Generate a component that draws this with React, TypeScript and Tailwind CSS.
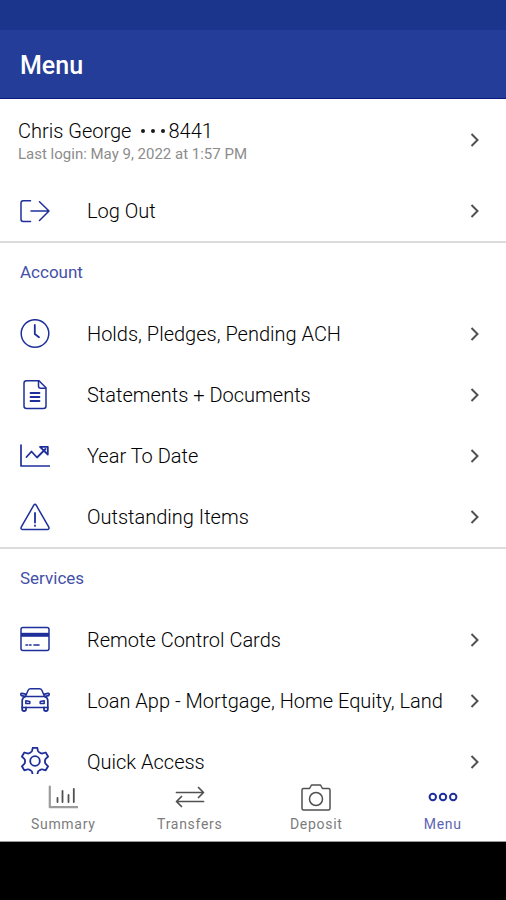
import type { ReactNode } from "react";

function Svg({ children }: { children: ReactNode }) {
  return (
    <svg
      width={30}
      height={30}
      viewBox="0 0 30 30"
      fill="none"
      stroke="currentColor"
      strokeWidth={1.5}
      strokeLinecap="round"
      strokeLinejoin="round"
      aria-hidden="true"
      className="shrink-0"
    >
      {children}
    </svg>
  );
}

const LogOutIcon = () => (
  <Svg>
    <path d="M10.500 4.800H3.200Q1 4.800 1 7v16.200q0 2.200 2.200 2.200h7.300" />
    <path d="M11 15h18M19.500 5.800 29 15l-9.500 9.500" />
  </Svg>
);

const ClockIcon = () => (
  <Svg>
    <circle cx="15" cy="14.500" r="13.800" />
    <path d="M14.800 6v9l4.200 3.300" strokeWidth={1.8} />
  </Svg>
);

const DocumentIcon = () => (
  <Svg>
    <path d="M19 .8H6.500Q4 .8 4 3.300V26q0 2.500 2.500 2.500h17q2.500 0 2.500-2.500V7.800z" />
    <path d="M18.500 1.300V6q0 2.300 2.300 2.300h4.700" />
    <path d="M10.500 13h9M10.500 17h9M10.500 21h9" strokeWidth={1.8} />
  </Svg>
);

const TrendIcon = () => (
  <Svg>
    <path d="M1 4v21h28.500" strokeWidth={1.7} />
    <path d="m6.500 16 5-5.500 5.500 6 8.500-8.500M20 5.800h7.800v7.700z" strokeWidth={1.8} />
  </Svg>
);

const WarningIcon = () => (
  <Svg>
    <path d="M13.800 3.200q1.200-1.700 2.400 0l12.600 22q.8 2.300-1.600 2.300H2.800q-2.400 0-1.600-2.300z" />
    <path d="M15 11v9.500M15 23.500v.4" strokeWidth={1.8} />
  </Svg>
);

const CardIcon = () => (
  <Svg>
    <rect x="1" y="2.500" width="28" height="23" rx="2" />
    <path d="M1 9.800h28" strokeWidth={4} strokeLinecap="butt" />
    <path d="M6 20h1.500m2 0h1.500m3 0h5" strokeWidth={1.6} />
  </Svg>
);

const CarIcon = () => (
  <Svg>
    <path d="M5.500 10.500 8 4.500q.8-1.700 2.600-1.700h8.800q1.800 0 2.600 1.700l2.500 6" />
    <path d="M5.500 10.500h19q3.300 1 3.300 4v7H2.200v-7q0-3 3.300-4z" strokeWidth={1.7} />
    <path d="M5 10.300l-3.500-.6Q-.2 7.600 2 7.400l3.500.8M25 10.300l3.500-.6q1.700-2.100-.5-2.300l-3.500.8" strokeWidth={1.7} />
    <path d="M2.200 21.500v1.700q0 1.800 1.900 1.800T6 23.200v-1.700M24 21.500v1.700q0 1.800 1.900 1.800t1.900-1.800v-1.700" strokeWidth={1.8} />
    <path d="m5.800 14.800 4 .6v2h-4zM24.200 14.800l-4 .6v2h4z" strokeWidth={1.5} />
  </Svg>
);

const GearIcon = () => (
  <Svg>
    <g strokeWidth={1.8}>
      <path d="M12.800.800h4.400l.8 3.200q.3.900 1.200 1.300l1.600.9q.8.500 1.700.2l3.200-.9 2.400 4-2.400 2.400q-.7.700-.7 1.700v1.600q0 1 .7 1.700l2.400 2.400-2.400 4-3.200-.9q-.9-.3-1.700.2l-1.600.9q-.9.400-1.200 1.300l-.8 3.200h-4.400l-.8-3.200q-.3-.9-1.200-1.300l-1.600-.9q-.8-.5-1.700-.2l-3.200.9-2.400-4 2.400-2.400q.7-.7.700-1.700v-1.600q0-1-.7-1.700L1.900 9.500l2.400-4 3.200.9q.9.300 1.700-.2l1.600-.9q.9-.4 1.200-1.300z" />
      <circle cx="15" cy="14" r="4.800" />
    </g>
  </Svg>
);

const SummaryIcon = () => (
  <Svg>
    <path d="M1.800 3.500v20.700h27.700" stroke="#9c9c9c" strokeWidth={2.2} />
    <path d="M9.500 15v4M14.500 8v11M20.500 12v7M25.800 6v13" strokeWidth={1.8} />
  </Svg>
);

const TransfersIcon = () => (
  <Svg>
    <path d="M1.500 9.500h27M23.500 4.500l5 5-5 5" strokeWidth={1.7} />
    <path d="M28.500 18.500h-27M6.500 13.500l-5 5 5 5" strokeWidth={1.7} />
  </Svg>
);

const CameraIcon = () => (
  <Svg>
    <path d="M10.500 2h9l2 3.500h6q1.500 0 1.500 1.500v18.500q0 1.500-1.500 1.500h-25Q1 27 1 25.500V7q0-1.500 1.500-1.500h6z" />
    <circle cx="15" cy="16" r="6.500" />
  </Svg>
);

const DotsIcon = () => (
  <Svg>
    <g strokeWidth={2}>
      <circle cx="4.800" cy="14" r="3.200" />
      <circle cx="15" cy="14" r="3.200" />
      <circle cx="25.200" cy="14" r="3.200" />
    </g>
  </Svg>
);

const Chevron = () => (
  <svg
    width={10}
    height={16}
    viewBox="0 0 10 16"
    fill="none"
    stroke="#505050"
    strokeWidth={2}
    aria-hidden="true"
    className="shrink-0"
  >
    <path d="m1.500 2 6 6-6 6" />
  </svg>
);

type Item = { label: string; icon: ReactNode };

const account: Item[] = [
  { label: "Holds, Pledges, Pending ACH", icon: <ClockIcon /> },
  { label: "Statements + Documents", icon: <DocumentIcon /> },
  { label: "Year To Date", icon: <TrendIcon /> },
  { label: "Outstanding Items", icon: <WarningIcon /> },
];

const services: Item[] = [
  { label: "Remote Control Cards", icon: <CardIcon /> },
  { label: "Loan App - Mortgage, Home Equity, Land", icon: <CarIcon /> },
  { label: "Quick Access", icon: <GearIcon /> },
];

const tabs: Item[] = [
  { label: "Summary", icon: <SummaryIcon /> },
  { label: "Transfers", icon: <TransfersIcon /> },
  { label: "Deposit", icon: <CameraIcon /> },
  { label: "Menu", icon: <DotsIcon /> },
];

function Row({ label, icon }: Item) {
  return (
    <button type="button" className="flex h-[61px] w-full items-center pr-[26px] pl-5 text-left">
      <span className="text-[#1f2f9a]">{icon}</span>
      <span className="ml-[37px] flex-1 text-xl whitespace-nowrap">{label}</span>
      <Chevron />
    </button>
  );
}

function Section({ title, items }: { title: string; items: Item[] }) {
  return (
    <section className="border-t-2 border-[#dcdcdc]">
      <h2 className="flex h-[60px] items-center px-5 text-[17px] font-normal text-[#4450a8]">{title}</h2>
      {items.map((item) => (
        <Row key={item.label} {...item} />
      ))}
    </section>
  );
}

export default function App() {
  return (
    <div className="flex h-screen flex-col bg-white font-[Roboto,sans-serif] font-light text-black">
      <div className="h-[30px] shrink-0 bg-[#1b358d]" />
      <header className="flex h-[69px] shrink-0 items-center border-b border-[#0a1a80] bg-[#233d98] px-5 pt-1">
        <h1 className="text-[25px] font-medium text-white">Menu</h1>
      </header>

      <main className="min-h-0 flex-1 overflow-y-auto [scrollbar-width:none]">
        <button type="button" className="flex h-[81px] w-full items-center pr-[26px] pl-[18px] text-left">
          <span className="flex-1 pt-1">
            <span className="flex items-center text-xl leading-6">
              Chris George
              <span className="mr-[3px] ml-[10px] flex gap-[6px]" aria-hidden="true">
                <span className="size-[4px] rounded-full bg-[#1c1c1c]" />
                <span className="size-[4px] rounded-full bg-[#1c1c1c]" />
                <span className="size-[4px] rounded-full bg-[#1c1c1c]" />
              </span>
              8441
            </span>
            <span className="block text-[15px] leading-[22px] font-normal text-[#8c8c8c]">
              Last login: May 9, 2022 at 1:57 PM
            </span>
          </span>
          <Chevron />
        </button>
        <Row label="Log Out" icon={<LogOutIcon />} />
        <Section title="Account" items={account} />
        <Section title="Services" items={services} />
      </main>

      <nav className="grid h-[68px] shrink-0 grid-cols-4 border-b border-[#9a9a9a] bg-white">
        {tabs.map(({ label, icon }) => (
          <button
            key={label}
            type="button"
            aria-current={label === "Menu" ? "page" : undefined}
            className="flex flex-col items-center pt-[9px] text-[#505050] aria-[current=page]:text-[#1f2f9a]"
          >
            {icon}
            <span className="text-sm leading-[22px] font-normal tracking-wider opacity-75">{label}</span>
          </button>
        ))}
      </nav>
      <div className="h-[58px] shrink-0 bg-black" />
    </div>
  );
}
